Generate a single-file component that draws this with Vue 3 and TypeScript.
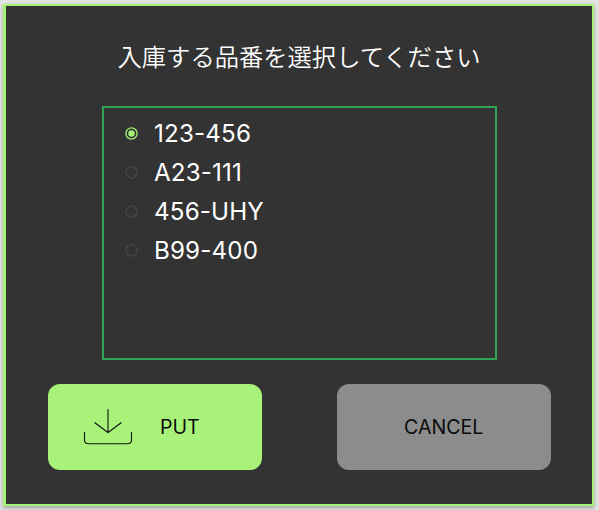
<script setup lang="ts">
import { ref } from 'vue'

const partNumbers: string[] = ['123-456', 'A23-111', '456-UHY', 'B99-400']
const selected = ref<string>(partNumbers[0])
</script>

<template>
  <div class="page">
    <main class="dialog">
      <h1 class="title">入庫する品番を選択してください</h1>
      <div class="list" role="radiogroup">
        <div
          v-for="part in partNumbers"
          :key="part"
          class="option"
          :class="{ checked: part === selected }"
          role="radio"
          :aria-checked="part === selected"
          @click="selected = part"
        >
          <svg class="radio" viewBox="0 0 13 13">
            <circle class="ring" cx="6.5" cy="6.5" r="5.6" />
            <circle v-if="part === selected" class="dot" cx="6.5" cy="6.5" r="3.2" />
          </svg>
          <span class="label">{{ part }}</span>
        </div>
      </div>
      <div class="actions">
        <button class="button put" type="button">
          <svg class="icon" viewBox="0 0 50 38">
            <path d="M25 1.2V24.6M11.5 14.5L25 24.5L38.5 14.5M1.5 24V32Q1.5 35.8 6 35.8H44Q48.5 35.8 48.5 32V24" />
          </svg>
          <span class="put-text">PUT</span>
        </button>
        <button class="button cancel" type="button">CANCEL</button>
      </div>
    </main>
  </div>
</template>

<style>
body {
  background: #e3e3e3;
}
</style>

<style scoped>
.page {
  box-sizing: border-box;
  width: 599px;
  height: 510px;
  padding: 4px 5px 4px 3px;
  overflow: hidden;
}
.dialog {
  box-sizing: border-box;
  height: 502px;
  border: 2px solid #a5f475;
  border-left-width: 3px;
  background: #333;
  box-shadow: 0 2px 4px rgba(0, 0, 0, 0.3);
  font-family: Inter, "Noto Sans CJK JP", sans-serif;
}
.title {
  margin: 0;
  padding-top: 32px;
  height: 68px;
  line-height: 36px;
  text-align: center;
  font-family: "Noto Sans CJK JP", sans-serif;
  font-size: 24.3px;
  font-weight: 350;
  color: #fff;
  white-space: nowrap;
}
.list {
  box-sizing: border-box;
  width: 395px;
  height: 254px;
  margin-left: 96px;
  padding: 6px 0 0 21px;
  border: 2px solid #2fa555;
}
.option {
  display: flex;
  align-items: center;
  height: 39px;
  color: #fff;
  font-size: 24.2px;
  font-weight: 400;
  letter-spacing: 0.15px;
}
.radio {
  width: 13px;
  height: 13px;
  margin-right: 16px;
}
.label {
  padding-bottom: 1px;
}
.ring {
  fill: none;
  stroke: #49454f;
  stroke-width: 1.3;
}
.checked .ring {
  stroke: #a5f475;
}
.dot {
  fill: #a5f475;
}
.actions {
  display: flex;
  gap: 75.5px;
  padding: 24px 0 0 42px;
}
.button {
  display: flex;
  align-items: center;
  box-sizing: border-box;
  width: 213.5px;
  height: 85.6px;
  padding: 0;
  border: 0;
  border-radius: 12px;
  font-family: inherit;
  font-size: 19.6px;
  font-weight: 400;
  color: #0b0b0b;
}
.put {
  background: #a8f27a;
}
.cancel {
  justify-content: center;
  background: #8c8c8c;
}
.icon {
  width: 50px;
  height: 38px;
  margin: 0 27px 0 35px;
  fill: none;
  stroke: #111;
  stroke-width: 1.1;
}
</style>
